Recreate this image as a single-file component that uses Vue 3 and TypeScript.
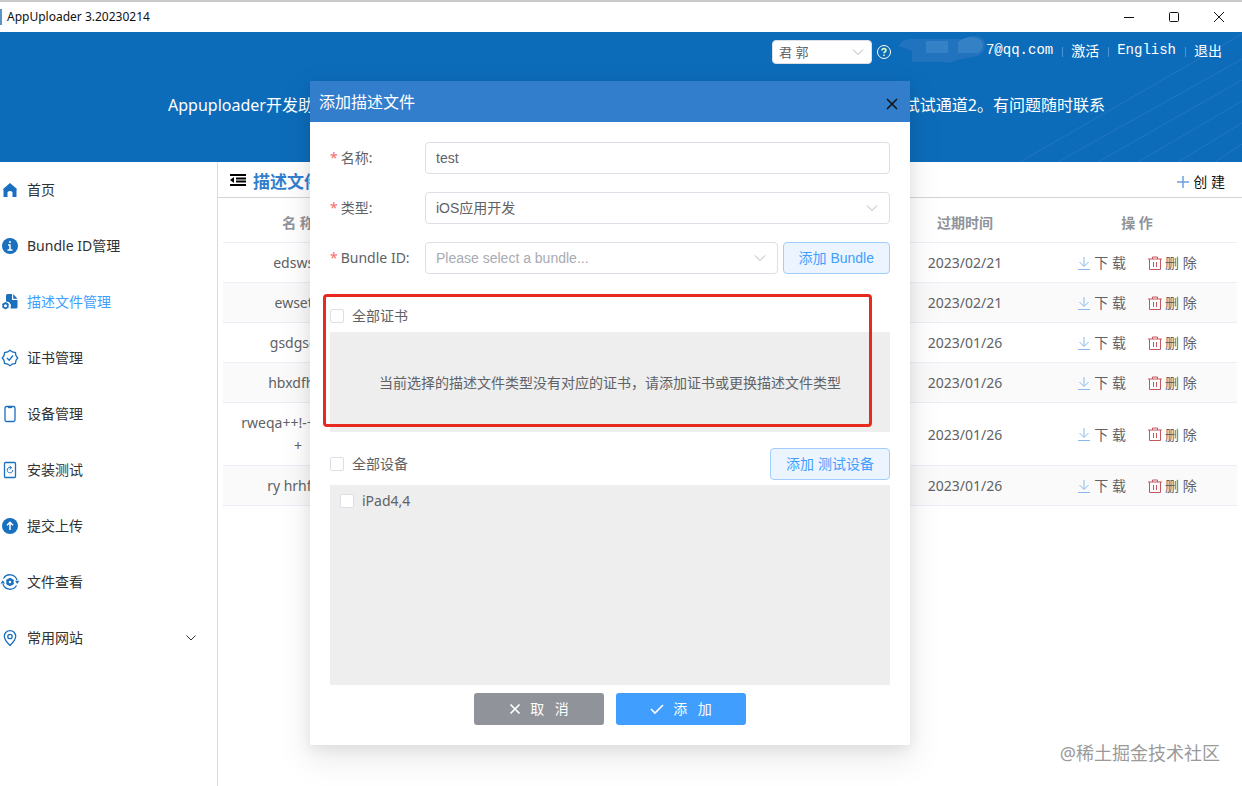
<script setup lang="ts">
import { ref } from 'vue'

interface NavItem {
  label: string
  icon: string
  active?: boolean
  expandable?: boolean
}
interface Profile {
  name: string
  expires: string
}

const nav: NavItem[] = [
  { label: '首页', icon: 'home' },
  { label: 'Bundle ID管理', icon: 'info' },
  { label: '描述文件管理', icon: 'profile', active: true },
  { label: '证书管理', icon: 'cert' },
  { label: '设备管理', icon: 'device' },
  { label: '安装测试', icon: 'install' },
  { label: '提交上传', icon: 'upload' },
  { label: '文件查看', icon: 'files' },
  { label: '常用网站', icon: 'pin', expandable: true },
]

const profiles: Profile[] = [
  { name: 'edswsd', expires: '2023/02/21' },
  { name: 'ewsetd', expires: '2023/02/21' },
  { name: 'gsdgsdg', expires: '2023/01/26' },
  { name: 'hbxdfhdf', expires: '2023/01/26' },
  { name: 'rweqa++!-++++++ +', expires: '2023/01/26' },
  { name: 'ry hrhfhd', expires: '2023/01/26' },
]

const name = ref('test')
const allCerts = ref(false)
const allDevices = ref(false)
const device = ref(false)
</script>

<template>
  <div class="app">
    <div class="titlebar">
      <span class="title">AppUploader 3.20230214</span>
      <div class="window-controls">
        <button type="button" aria-label="Minimize">
          <svg width="12" height="12" viewBox="0 0 12 12"><path d="M1 6.5h10" /></svg>
        </button>
        <button type="button" aria-label="Maximize">
          <svg width="12" height="12" viewBox="0 0 12 12"><rect x="1.5" y="1.5" width="9" height="9" rx="1" /></svg>
        </button>
        <button type="button" aria-label="Close">
          <svg width="12" height="12" viewBox="0 0 12 12"><path d="M1 1l10 10M11 1L1 11" /></svg>
        </button>
      </div>
    </div>

    <header class="banner">
      <svg class="rays" width="230" height="130" viewBox="0 0 230 130">
        <path d="M8 130L230 2M46 130L230 27M86 130L230 48M126 130L230 69M166 130L230 91M203 130L230 112" />
      </svg>
      <div class="account">
        <div class="select-wrap team">
          <select aria-label="Team"><option>君 郭</option></select>
          <svg class="chevron" width="12" height="12" viewBox="0 0 12 12"><path d="M1 3.5l5 5 5-5" /></svg>
        </div>
        <svg class="help" width="16" height="16" viewBox="0 0 16 16">
          <circle cx="8" cy="8" r="6.5" />
          <path class="mark" d="M6 6.4c0-2.4 4-2.4 4 0 0 1.3-2 1.400-2 2.800M8 10.500v1.500" />
        </svg>
        <svg class="masked" width="88" height="28" viewBox="0 0 88 28">
          <path d="M1 10Q4 3 12 3H66Q78-4 86 4Q90 14 80 20L58 24Q54 28 46 26H14V15Z" fill="#2173be" />
          <path d="M28 5h22v12H28z" fill="#3481c5" />
          <path d="M60 6Q72-3 83 4Q88 12 80 17H60z" fill="#3481c5" />
        </svg>
        <span class="email">7@qq.com</span>
        <i class="bar"></i>
        <a href="#">激活</a>
        <i class="bar"></i>
        <a href="#">English</a>
        <i class="bar"></i>
        <a href="#">退出</a>
      </div>
      <p class="notice"><span>Appuploader开发助手</span><span>试试通道2。有问题随时联系</span></p>
    </header>

    <div class="body">
      <nav class="sidebar">
        <a v-for="item in nav" :key="item.icon" href="#" :class="{ active: item.active }">
          <svg class="nav-icon" width="20" height="20" viewBox="0 0 20 20">
            <path v-if="item.icon === 'home'" class="solid" d="M10 3L17.500 9.500H16.500V17H12.500V12.500Q12.500 11 10 11Q7.500 11 7.500 12.500V17H3.500V9.500H2.500Z" />
            <template v-else-if="item.icon === 'info'">
              <circle class="solid" cx="10" cy="10" r="8" />
              <path class="white" d="M10 5v2M8 9h2v5M7.500 14h5" />
            </template>
            <template v-else-if="item.icon === 'profile'">
              <path class="solid" d="M6 3.500Q6 2 7.500 2H12V8H17.500V15Q17.500 16.500 16 16.500H10.500L11 13L9 10L6 9.500Z" />
              <path class="solid" d="M13.200 2L17.500 6.800H13.200Z" />
              <circle class="ring" cx="5.500" cy="13.700" r="2.300" />
              <path class="ring" d="M5.500 10.200v1M5.500 16.200v1M2.500 12l.9.500M7.600 14.900l.9.500M2.500 15.400l.9-.500M7.600 12.500l.9-.500" />
            </template>
            <template v-else-if="item.icon === 'cert'">
              <path class="line" d="M10 2.300L12.300 4L15.400 4.600L16 7.700L17.700 10L16 12.300L15.400 15.400L12.300 16L10 17.700L7.700 16L4.600 15.400L4 12.300L2.300 10L4 7.700L4.600 4.600L7.700 4Z" />
              <path class="line" d="M7 10l2.200 2.200L13 7.500" />
            </template>
            <template v-else-if="item.icon === 'device'">
              <rect class="line" x="5" y="2.500" width="10" height="15" rx="1.500" />
              <path class="line" d="M8 3.500h4" />
            </template>
            <template v-else-if="item.icon === 'install'">
              <rect class="line" x="4.500" y="2.500" width="11" height="15" rx="1" />
              <path d="M11.500 7.700A2.800 2.800 0 1 0 12.800 10M9.700 6l2 1.700-2 1.600" />
            </template>
            <template v-else-if="item.icon === 'upload'">
              <circle class="solid" cx="10" cy="10" r="8" />
              <path class="white" d="M10 14V6.500M7 9.200l3-3 3 3" />
            </template>
            <template v-else-if="item.icon === 'files'">
              <path class="line" d="M3.500 6.500A7.400 7.400 0 0 1 17 8M16.500 13.500A7.400 7.400 0 0 1 3 12" />
              <path class="solid" d="M.5 11.500L2.800 8.300L5 11.500ZM15 8.700L17.200 12L19.500 8.700Z" />
              <circle class="gear" cx="10" cy="10" r="2.500" />
              <path class="ring" d="M10 6v1M10 13v1M6.500 8l.9.500M12.600 11.500l.9.500M6.500 12l.9-.500M12.600 8.500l.9-.500" />
            </template>
            <template v-else>
              <path class="line" d="M10 17.500Q4.300 12 4.300 8.300A5.700 5.700 0 0 1 15.700 8.300Q15.700 12 10 17.500Z" />
              <circle class="line" cx="10" cy="8.500" r="2.200" />
            </template>
          </svg>
          <span class="caption">{{ item.label }}</span>
          <svg v-if="item.expandable" class="expand" width="12" height="12" viewBox="0 0 12 12"><path d="M1.500 3.500L6 8l4.500-4.500" /></svg>
        </a>
      </nav>

      <main>
        <div class="toolbar">
          <svg class="fold" width="16" height="14" viewBox="0 0 16 14">
            <path d="M0 2h16M6 5.500h10M6 8.500h10M0 12h16" />
            <path d="M0 7l4-3v6z" class="arrow" />
          </svg>
          <h1>描述文件管理</h1>
          <button type="button" class="create">
            <svg width="14" height="14" viewBox="0 0 14 14"><path d="M7 1v12M1 7h12" /></svg><span class="caption">创 建</span>
          </button>
        </div>
        <table>
          <colgroup><col class="c-name" /><col /><col class="c-date" /><col class="c-ops" /></colgroup>
          <thead>
            <tr><th>名 称</th><td></td><th>过期时间</th><th>操 作</th></tr>
          </thead>
          <tbody>
            <tr v-for="p in profiles" :key="p.name">
              <td>{{ p.name }}</td>
              <td></td>
              <td>{{ p.expires }}</td>
              <td>
                <div class="ops">
                  <button type="button">
                    <svg class="down" width="14" height="14" viewBox="0 0 14 14"><path d="M7 1v9M2.500 6L7 10.500 11.500 6M1 13.500h12" /></svg>下 载
                  </button>
                  <button type="button">
                    <svg class="trash" width="14" height="14" viewBox="0 0 14 14"><path d="M0 3h14M4.500 3V1h5v2M1.500 3v10.500h11V3M5.500 6v5M8.500 6v5" /></svg>删 除
                  </button>
                </div>
              </td>
            </tr>
          </tbody>
        </table>
      </main>
    </div>

    <div class="watermark">@稀土掘金技术社区</div>

    <div class="overlay">
      <section class="dialog" role="dialog" aria-labelledby="dialog-title">
        <div class="dialog-head">
          <h2 id="dialog-title">添加描述文件</h2>
          <button type="button" aria-label="Close">
            <svg width="12" height="12" viewBox="0 0 12 12"><path d="M1 1l10 10M11 1L1 11" /></svg>
          </button>
        </div>
        <form class="dialog-body" @submit.prevent>
          <div class="field">
            <label for="f-name" class="caption"><em>*</em>名称:</label>
            <input id="f-name" v-model="name" type="text" class="text" />
          </div>
          <div class="field">
            <label for="f-type" class="caption"><em>*</em>类型:</label>
            <div class="select-wrap">
              <select id="f-type"><option>iOS应用开发</option></select>
              <svg class="chevron" width="12" height="12" viewBox="0 0 12 12"><path d="M1 3.500l5 5 5-5" /></svg>
            </div>
          </div>
          <div class="field">
            <label for="f-bundle" class="caption"><em>*</em>Bundle ID:</label>
            <div class="select-wrap">
              <select id="f-bundle" class="placeholder"><option>Please select a bundle...</option></select>
              <svg class="chevron" width="12" height="12" viewBox="0 0 12 12"><path d="M1 3.500l5 5 5-5" /></svg>
            </div>
            <button type="button" class="plain">添加 Bundle</button>
          </div>

          <div class="certs">
            <label class="check"><input v-model="allCerts" type="checkbox" /><span class="caption">全部证书</span></label>
            <div class="panel empty">当前选择的描述文件类型没有对应的证书，请添加证书或更换描述文件类型</div>
            <div class="highlight"></div>
          </div>

          <div class="devices-head">
            <label class="check"><input v-model="allDevices" type="checkbox" /><span class="caption">全部设备</span></label>
            <button type="button" class="plain">添加 测试设备</button>
          </div>
          <div class="panel devices">
            <label class="check"><input v-model="device" type="checkbox" /><span class="caption">iPad4,4</span></label>
          </div>

          <div class="actions">
            <button type="button" class="cancel">
              <svg width="12" height="12" viewBox="0 0 12 12"><path d="M1.500 1.500l9 9M10.500 1.500l-9 9" /></svg><span class="caption">取&ensp; 消</span>
            </button>
            <button type="submit" class="submit">
              <svg width="14" height="12" viewBox="0 0 14 12"><path d="M1 6l4 4 8-8" /></svg><span class="caption">添&ensp; 加</span>
            </button>
          </div>
        </form>
      </section>
    </div>
  </div>
</template>

<style>
body {
  margin: 0;
}
</style>

<style scoped>
* {
  box-sizing: border-box;
}
.app {
  position: relative;
  display: flex;
  flex-direction: column;
  min-height: 100vh;
  overflow: hidden;
  background: #fff;
  color: #606266;
  font-family: "Noto Sans", "Noto Sans CJK SC", sans-serif;
  font-size: 14px;
}
svg {
  flex: none;
  fill: none;
  stroke: currentColor;
}
button {
  margin: 0;
  padding: 0;
  border: 0;
  background: none;
  color: inherit;
  font: inherit;
  cursor: pointer;
}
a {
  color: inherit;
  text-decoration: none;
}
.caption {
  padding-bottom: 2px;
}

.titlebar {
  display: flex;
  align-items: center;
  justify-content: space-between;
  height: 32px;
  border-top: 2px solid #c9c9c9;
  color: #111;
}
.title {
  padding-left: 5px;
  border-left: 2px solid #5b93c7;
  font-size: 12px;
  line-height: 16px;
}
.window-controls {
  display: flex;
  padding-right: 1px;
}
.window-controls button {
  display: flex;
  align-items: center;
  justify-content: center;
  width: 45px;
  height: 28px;
}

.banner {
  position: relative;
  height: 130px;
  background: #0d6cba;
  color: #fff;
}
.rays {
  position: absolute;
  right: 0;
  bottom: 0;
  stroke: #2376c0;
}
.account {
  position: relative;
  display: flex;
  align-items: center;
  justify-content: flex-end;
  height: 40px;
  padding-right: 20px;
  font-family: "Liberation Mono", "Noto Sans CJK SC", monospace;
  font-size: 14px;
}
.account a,
.email {
  padding-bottom: 4px;
}
.help {
  margin: 0 6px 0 4px;
}
.mark {
  stroke: #d9f7c0;
  stroke-width: 1.6;
}
.masked {
  margin-bottom: 4px;
  stroke: none;
}
.bar {
  width: 1px;
  height: 10px;
  margin: 0 8px 0 9px;
  background: #4b94d1;
}
.notice {
  display: flex;
  justify-content: space-between;
  margin: 0;
  padding: 21px 137px 0 168px;
  font-size: 16px;
  line-height: 24px;
}

.select-wrap {
  position: relative;
  flex: 1;
}
select,
.text {
  display: block;
  width: 100%;
  height: 32px;
  margin: 0;
  padding: 0 10px;
  border: 1px solid #dcdfe6;
  border-radius: 4px;
  outline: 0;
  background: #fff;
  color: #606266;
  font-family: "Liberation Sans", "Noto Sans CJK SC", sans-serif;
  font-size: 14px;
  appearance: none;
}
select.placeholder {
  color: #a8abb2;
}
.chevron {
  position: absolute;
  top: calc(50% - 6px);
  right: 12px;
  color: #b0b3ba;
  pointer-events: none;
}
.team {
  flex: none;
  width: 100px;
}
.team select {
  height: 24px;
  padding: 0 6px;
  font-size: 13px;
}
.team .chevron {
  right: 8px;
}

.body {
  display: flex;
  flex: 1;
}
.sidebar {
  width: 218px;
  border-right: 1px solid #dcdcdc;
}
.sidebar a {
  display: flex;
  align-items: center;
  height: 56px;
  padding-right: 20px;
  color: #303133;
}
.sidebar a.active {
  color: #409eff;
}
.nav-icon {
  margin-right: 7px;
  color: #1a6fbf;
}
.solid {
  fill: currentColor;
  stroke: none;
}
.white {
  stroke: #fff;
  stroke-width: 1.5;
}
.line {
  stroke-width: 1.3;
}
.ring {
  stroke-width: 1.6;
}
.gear {
  stroke-width: 2.4;
}
.expand {
  margin-left: auto;
}
main {
  flex: 1;
  min-width: 0;
}
.toolbar {
  display: flex;
  align-items: center;
  height: 36px;
  padding: 1px 17px 0 12px;
  border-bottom: 1px solid #d4d4d4;
}
.fold {
  color: #000;
  stroke-width: 2;
}
.arrow {
  fill: #000;
  stroke: none;
}
h1 {
  margin: 0 0 0 7px;
  color: #337ecc;
  font-size: 17px;
  font-weight: 700;
}
.create {
  display: flex;
  align-items: center;
  gap: 3px;
  margin-left: auto;
  padding-top: 4px;
  color: #111;
}
.create svg {
  color: #6d9fe0;
  stroke-width: 1.5;
}
table {
  width: calc(100% - 10px);
  margin: 6px 5px 0;
  border-collapse: separate;
  border-spacing: 0;
  table-layout: fixed;
}
.c-name {
  width: 150px;
}
.c-date {
  width: 144px;
}
.c-ops {
  width: 200px;
}
th,
td {
  padding: 8px 14px;
  border-bottom: 1px solid #ebeef5;
  line-height: 23px;
  text-align: center;
}
thead th,
thead td {
  padding: 7px 10px 8px;
  color: #909399;
}
tbody tr:nth-child(even) {
  background: #fafafa;
}
.ops {
  display: flex;
  justify-content: center;
  gap: 22px;
}
.ops button {
  display: flex;
  align-items: center;
  gap: 3px;
}
.down {
  color: #8bb9ef;
}
.trash {
  color: #c45660;
}
.watermark {
  position: absolute;
  right: 22px;
  bottom: 19px;
  color: #9a9a9a;
  font-size: 18px;
  line-height: 28px;
}

.overlay {
  position: absolute;
  inset: 81px 22px auto 0;
  display: flex;
  justify-content: center;
}
.dialog {
  width: 600px;
  border-radius: 2px;
  background: #fff;
  box-shadow: 0 12px 32px 4px rgba(0, 0, 0, 0.08), 0 4px 14px rgba(0, 0, 0, 0.08);
}
.dialog-head {
  display: flex;
  align-items: center;
  justify-content: space-between;
  height: 41px;
  padding: 0 12px 0 9px;
  background: #337ecc;
  color: #fff;
}
h2 {
  margin: 0;
  padding-bottom: 1px;
  font-size: 16px;
  font-weight: 400;
}
.dialog-head button {
  display: flex;
  padding-top: 4px;
  color: #111;
}
.dialog-head svg {
  stroke-width: 1.5;
}
.dialog-body {
  padding: 20px;
}
.field {
  display: flex;
  align-items: center;
  gap: 5px;
  margin-bottom: 18px;
}
.field > label {
  flex: none;
  width: 90px;
  white-space: nowrap;
}
.text {
  flex: 1;
  min-width: 0;
}
em {
  margin-right: 3px;
  color: #f56c6c;
  font-style: normal;
}
.plain {
  height: 32px;
  padding: 0 15px 2px;
  border: 1px solid #a0cfff;
  border-radius: 4px;
  background: #ecf5ff;
  color: #409eff;
  font-family: "Liberation Sans", "Noto Sans CJK SC", sans-serif;
}
.certs {
  position: relative;
  margin-top: 26px;
}
.check {
  display: flex;
  align-items: center;
  gap: 8px;
  height: 32px;
}
.check input {
  width: 14px;
  height: 14px;
  margin: 0;
  border: 1px solid #dcdfe6;
  border-radius: 2px;
  background: #fff;
  appearance: none;
}
.check input:checked {
  background: #409eff;
}
.panel {
  background: #eee;
}
.empty {
  display: flex;
  align-items: center;
  justify-content: center;
  height: 100px;
}
.highlight {
  position: absolute;
  inset: -6px 18px 5px -7px;
  border: 3px solid #e8291f;
  border-radius: 4px;
  pointer-events: none;
}
.devices-head {
  display: flex;
  justify-content: space-between;
  margin: 16px 0 5px;
}
.devices {
  height: 200px;
  padding: 0 10px;
}
.actions {
  display: flex;
  justify-content: center;
  gap: 12px;
  padding-top: 8px;
}
.actions button {
  display: flex;
  align-items: center;
  justify-content: center;
  gap: 9px;
  width: 130px;
  height: 32px;
  border-radius: 3px;
  color: #fff;
}
.actions svg {
  stroke-width: 1.7;
}
.cancel {
  background: #909399;
}
.submit {
  background: #409eff;
}
</style>
